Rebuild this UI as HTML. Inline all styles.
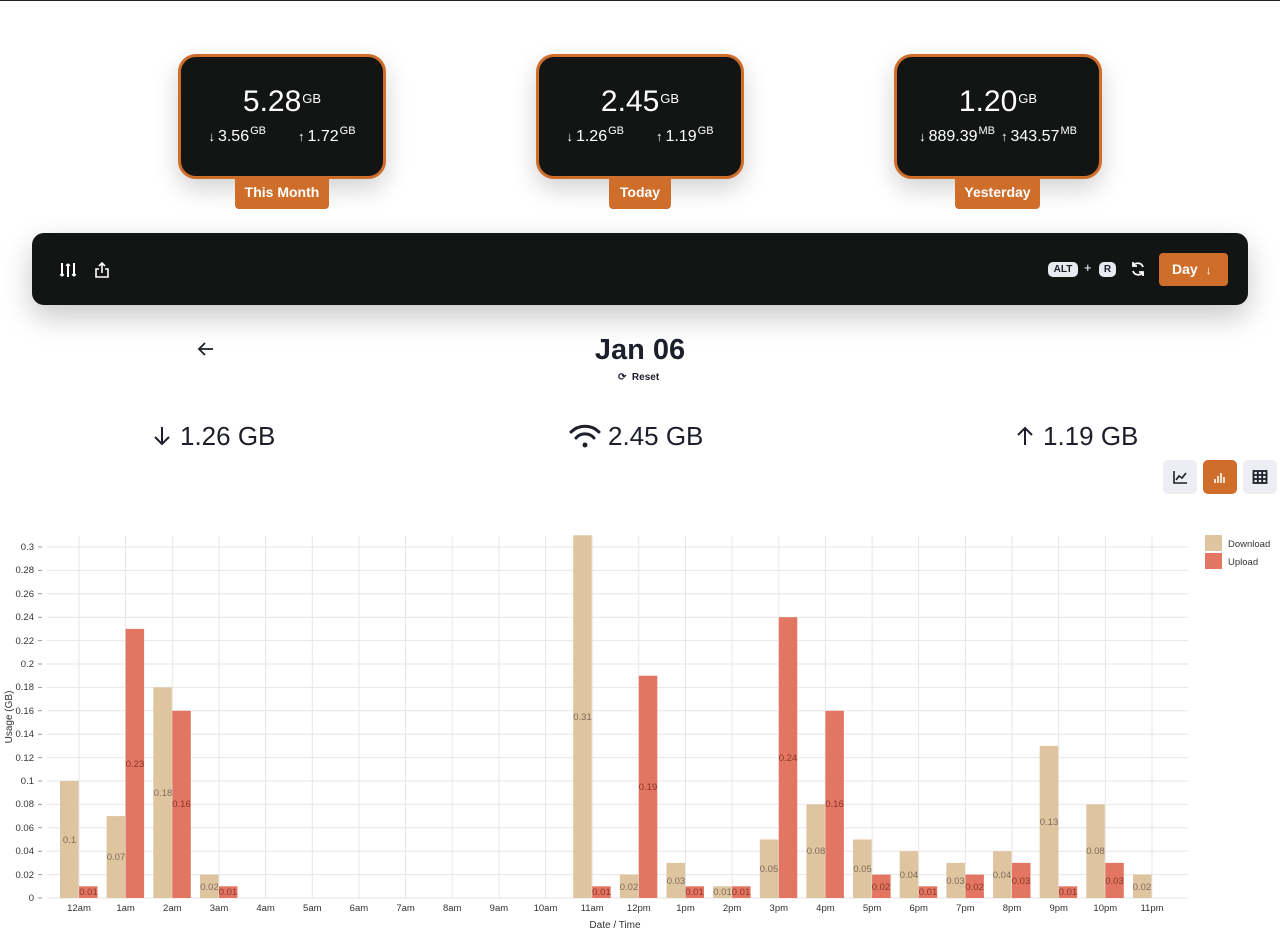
<!DOCTYPE html>
<html><head><meta charset="utf-8"><style>
*{box-sizing:border-box;margin:0;padding:0}
body{width:1280px;height:940px;background:#fff;font-family:"Liberation Sans",sans-serif;position:relative;overflow:hidden;color:#1d1f2a}
.topline{position:absolute;left:0;top:0;width:1280px;height:1px;background:#222}
.card{position:absolute;top:54px;width:208px;height:125px;background:#131515;border:3px solid #cf6d2a;border-radius:18px;color:#fff;text-align:center;box-shadow:0 10px 25px rgba(0,0,0,.18)}
.card .big{font-size:30px;margin-top:27px;line-height:36px}
.card sup{font-size:12px;vertical-align:top;position:relative;top:-3px;margin-left:1px}
.card .big sup{font-size:13px;top:-3px}
.card .row{font-size:16px;margin-top:8px;display:flex;justify-content:center;gap:32px}
.card .row sup{font-size:11px}
.card .ar{font-size:13px;margin-right:3px}
.tab{position:absolute;top:178px;height:31px;background:#cf6d2a;color:#fff;font-size:14px;font-weight:600;line-height:29px;text-align:center;border-radius:0 0 4px 4px}
.bar{position:absolute;left:32px;top:233px;width:1216px;height:72px;background:#131515;border-radius:12px;box-shadow:0 12px 30px rgba(0,0,0,.22)}
.kbd{position:absolute;background:#e8eaf0;color:#1d1f2a;font-size:10px;font-weight:bold;border-radius:5px;height:15px;line-height:15px;text-align:center}
.day{position:absolute;left:1127px;top:20px;width:69px;height:33px;background:#cf6d2a;color:#fff;border-radius:4px;font-size:14px;font-weight:bold;line-height:33px;padding-left:13px}
.stat{position:absolute;top:421px;font-size:26px;color:#1d1f2a}
.vbtn{position:absolute;top:460px;width:34px;height:34px;border-radius:5px;background:#eceef3}
</style></head><body>
<div class="topline"></div>

<div class="card" style="left:178px"><div class="big">5.28<sup>GB</sup></div><div class="row"><span><span class="ar">↓</span>3.56<sup>GB</sup></span><span><span class="ar">↑</span>1.72<sup>GB</sup></span></div></div>
<div class="tab" style="left:235px;width:94px">This Month</div>
<div class="card" style="left:536px"><div class="big">2.45<sup>GB</sup></div><div class="row"><span><span class="ar">↓</span>1.26<sup>GB</sup></span><span><span class="ar">↑</span>1.19<sup>GB</sup></span></div></div>
<div class="tab" style="left:609px;width:62px">Today</div>
<div class="card" style="left:894px"><div class="big">1.20<sup>GB</sup></div><div class="row" style="gap:6px"><span><span class="ar">↓</span>889.39<sup>MB</sup></span><span><span class="ar">↑</span>343.57<sup>MB</sup></span></div></div>
<div class="tab" style="left:955px;width:85px">Yesterday</div>

<div class="bar">
<svg style="position:absolute;left:28px;top:29px" width="18" height="16" viewBox="0 0 18 16" fill="none" stroke="#fff" stroke-width="2"><path d="M2 1v13M2 14l-1.5-2M2 14l1.5-2M8 2v13M8 2l-1.5 2M8 2l1.5 2M14 1v13M14 14l-1.5-2M14 14l1.5-2"/></svg>
<svg style="position:absolute;left:62px;top:28px" width="16" height="18" viewBox="0 0 16 18" fill="none" stroke="#fff" stroke-width="1.6"><path d="M8 12V2M5 5l3-3 3 3M5 8H2v8h12V8h-3"/></svg>
<div class="kbd" style="left:1016px;top:29px;width:30px">ALT</div>
<div style="position:absolute;left:1052px;top:27px;color:#fff;font-size:13px">+</div>
<div class="kbd" style="left:1067px;top:29px;width:17px">R</div>
<svg style="position:absolute;left:1098px;top:28px" width="16" height="16" viewBox="0 0 16 16" fill="none" stroke="#fff" stroke-width="1.8"><path d="M13 6A5.5 5.5 0 0 0 3 5M3 1v4h4M3 10a5.5 5.5 0 0 0 10 1M13 15v-4H9"/></svg>
<div class="day">Day <span style="font-size:12px;margin-left:4px">↓</span></div>
</div>

<svg style="position:absolute;left:197px;top:341px" width="18" height="16" viewBox="0 0 18 16" fill="none" stroke="#1d1f2a" stroke-width="1.8"><path d="M16 8H2M8 2L2 8l6 6"/></svg>
<div style="position:absolute;left:0;width:1280px;top:334px;text-align:center;font-size:29px;font-weight:bold">Jan 06</div>
<div style="position:absolute;left:618px;top:372px;font-size:10px;font-weight:600">⟳&nbsp; Reset</div>

<svg style="position:absolute;left:153px;top:426px" width="18" height="20" viewBox="0 0 18 20" fill="none" stroke="#1d1f2a" stroke-width="2"><path d="M9 1v17M2 11l7 7 7-7"/></svg>
<div class="stat" style="left:180px">1.26 GB</div>
<svg style="position:absolute;left:568px;top:424px" width="34" height="26" viewBox="0 0 34 26" fill="none" stroke="#1d1f2a" stroke-width="3" stroke-linecap="round"><path d="M3 8a20 20 0 0 1 28 0M8 14a12 12 0 0 1 18 0"/><circle cx="17" cy="21" r="2.5" fill="#1d1f2a" stroke="none"/></svg>
<div class="stat" style="left:608px">2.45 GB</div>
<svg style="position:absolute;left:1016px;top:426px" width="18" height="20" viewBox="0 0 18 20" fill="none" stroke="#1d1f2a" stroke-width="2"><path d="M9 19V2M2 9l7-7 7 7"/></svg>
<div class="stat" style="left:1043px">1.19 GB</div>

<div class="vbtn" style="left:1163px"><svg width="34" height="34" viewBox="0 0 34 34" fill="none" stroke="#1d1f2a" stroke-width="1.6"><path d="M11 11v12h13M13 20l3-4 3 2 4-5"/></svg></div>
<div class="vbtn" style="left:1203px;background:#cf6d2a"><svg width="34" height="34" viewBox="0 0 34 34" fill="none" stroke="#fff" stroke-width="1.6"><path d="M12 23v-4M15 23v-7M18 23v-10M21 23v-6"/></svg></div>
<div class="vbtn" style="left:1243px"><svg width="34" height="34" viewBox="0 0 34 34" fill="none" stroke="#1d1f2a" stroke-width="1.8"><rect x="10.5" y="11" width="13" height="12"/><path d="M10.5 15h13M10.5 19h13M14.8 11v12M19.2 11v12"/></svg></div>

<svg style="position:absolute;left:0;top:520px" width="1280" height="420" viewBox="0 520 1280 420" font-family="Liberation Sans, sans-serif">
<g stroke="#e6e6e6" stroke-width="1">
<path d="M47 898H1188M47 874.6H1188M47 851.2H1188M47 827.8H1188M47 804.4H1188M47 781H1188M47 757.6H1188M47 734.2H1188M47 710.8H1188M47 687.4H1188M47 664H1188M47 640.6H1188M47 617.2H1188M47 593.8H1188M47 570.4H1188M47 547H1188"/>
<path d="M79 536V898M125.6 536V898M172.3 536V898M219 536V898M265.6 536V898M312.3 536V898M358.9 536V898M405.6 536V898M452.2 536V898M498.9 536V898M545.5 536V898M592.2 536V898M638.8 536V898M685.5 536V898M732.1 536V898M778.8 536V898M825.4 536V898M872.1 536V898M918.7 536V898M965.4 536V898M1012 536V898M1058.7 536V898M1105.3 536V898M1152 536V898"/>
</g>
<g stroke="#999" stroke-width="1"><path d="M38 898h4M38 874.6h4M38 851.2h4M38 827.8h4M38 804.4h4M38 781h4M38 757.6h4M38 734.2h4M38 710.8h4M38 687.4h4M38 664h4M38 640.6h4M38 617.2h4M38 593.8h4M38 570.4h4M38 547h4"/></g>
<g font-size="9.5" fill="#333" text-anchor="end">
<text x="34" y="901">0</text><text x="34" y="878">0.02</text><text x="34" y="854">0.04</text><text x="34" y="831">0.06</text><text x="34" y="807">0.08</text><text x="34" y="784">0.1</text><text x="34" y="761">0.12</text><text x="34" y="737">0.14</text><text x="34" y="714">0.16</text><text x="34" y="690">0.18</text><text x="34" y="667">0.2</text><text x="34" y="644">0.22</text><text x="34" y="620">0.24</text><text x="34" y="597">0.26</text><text x="34" y="573">0.28</text><text x="34" y="550">0.3</text>
</g>
<text x="12" y="717" font-size="10" fill="#333" text-anchor="middle" transform="rotate(-90 12 717)">Usage (GB)</text>
<g fill="#dfc4a0">
<rect x="60" y="781" width="18.5" height="117"/><rect x="106.6" y="816.1" width="18.5" height="81.9"/><rect x="153.3" y="687.4" width="18.5" height="210.6"/><rect x="200" y="874.6" width="18.5" height="23.4"/>
<rect x="573.2" y="535.3" width="18.5" height="362.7"/><rect x="619.8" y="874.6" width="18.5" height="23.4"/><rect x="666.5" y="862.9" width="18.5" height="35.1"/><rect x="713.1" y="886.3" width="18.5" height="11.7"/><rect x="759.8" y="839.5" width="18.5" height="58.5"/><rect x="806.4" y="804.4" width="18.5" height="93.6"/><rect x="853.1" y="839.5" width="18.5" height="58.5"/><rect x="899.7" y="851.2" width="18.5" height="46.8"/><rect x="946.4" y="862.9" width="18.5" height="35.1"/><rect x="993" y="851.2" width="18.5" height="46.8"/><rect x="1039.7" y="745.9" width="18.5" height="152.1"/><rect x="1086.3" y="804.4" width="18.5" height="93.6"/><rect x="1133" y="874.6" width="18.5" height="23.4"/>
</g>
<g fill="#e27662">
<rect x="79" y="886.3" width="18.5" height="11.7"/><rect x="125.6" y="628.9" width="18.5" height="269.1"/><rect x="172.3" y="710.8" width="18.5" height="187.2"/><rect x="219" y="886.3" width="18.5" height="11.7"/>
<rect x="592.2" y="886.3" width="18.5" height="11.7"/><rect x="638.8" y="675.7" width="18.5" height="222.3"/><rect x="685.5" y="886.3" width="18.5" height="11.7"/><rect x="732.1" y="886.3" width="18.5" height="11.7"/><rect x="778.8" y="617.2" width="18.5" height="280.8"/><rect x="825.4" y="710.8" width="18.5" height="187.2"/><rect x="872.1" y="874.6" width="18.5" height="23.4"/><rect x="918.7" y="886.3" width="18.5" height="11.7"/><rect x="965.4" y="874.6" width="18.5" height="23.4"/><rect x="1012" y="862.9" width="18.5" height="35.1"/><rect x="1058.7" y="886.3" width="18.5" height="11.7"/><rect x="1105.3" y="862.9" width="18.5" height="35.1"/>
</g>
<g font-size="9.5" fill="#7d6b58" text-anchor="middle">
<text x="69.5" y="843">0.1</text><text x="116" y="860">0.07</text><text x="163" y="796">0.18</text><text x="209.5" y="890">0.02</text><text x="582.5" y="720">0.31</text><text x="629" y="890">0.02</text><text x="676" y="884">0.03</text><text x="722.5" y="895">0.01</text><text x="769" y="872">0.05</text><text x="816" y="854">0.08</text><text x="862.5" y="872">0.05</text><text x="909" y="878">0.04</text><text x="955.5" y="884">0.03</text><text x="1002" y="878">0.04</text><text x="1049" y="825">0.13</text><text x="1095.5" y="854">0.08</text><text x="1142" y="890">0.02</text>
</g>
<g font-size="9.5" fill="#8a3428" text-anchor="middle">
<text x="88.5" y="895">0.01</text><text x="135" y="767">0.23</text><text x="181.5" y="807">0.16</text><text x="228" y="895">0.01</text><text x="601.5" y="895">0.01</text><text x="648" y="790">0.19</text><text x="694.5" y="895">0.01</text><text x="741" y="895">0.01</text><text x="788" y="761">0.24</text><text x="834.5" y="807">0.16</text><text x="881" y="890">0.02</text><text x="928" y="895">0.01</text><text x="974.5" y="890">0.02</text><text x="1021" y="884">0.03</text><text x="1068" y="895">0.01</text><text x="1114.5" y="884">0.03</text>
</g>
<g font-size="9.5" fill="#333" text-anchor="middle">
<text x="79" y="911">12am</text><text x="125.6" y="911">1am</text><text x="172.3" y="911">2am</text><text x="219" y="911">3am</text><text x="265.6" y="911">4am</text><text x="312.3" y="911">5am</text><text x="358.9" y="911">6am</text><text x="405.6" y="911">7am</text><text x="452.2" y="911">8am</text><text x="498.9" y="911">9am</text><text x="545.5" y="911">10am</text><text x="592.2" y="911">11am</text><text x="638.8" y="911">12pm</text><text x="685.5" y="911">1pm</text><text x="732.1" y="911">2pm</text><text x="778.8" y="911">3pm</text><text x="825.4" y="911">4pm</text><text x="872.1" y="911">5pm</text><text x="918.7" y="911">6pm</text><text x="965.4" y="911">7pm</text><text x="1012" y="911">8pm</text><text x="1058.7" y="911">9pm</text><text x="1105.3" y="911">10pm</text><text x="1152" y="911">11pm</text>
<text x="615" y="928" font-size="10">Date / Time</text>
</g>
<rect x="1205" y="535" width="17" height="16" fill="#dfc4a0"/><rect x="1205" y="553" width="17" height="16" fill="#e27662"/>
<text x="1228" y="547" font-size="9.5" fill="#333">Download</text><text x="1228" y="565" font-size="9.5" fill="#333">Upload</text>
</svg>
</body></html>
